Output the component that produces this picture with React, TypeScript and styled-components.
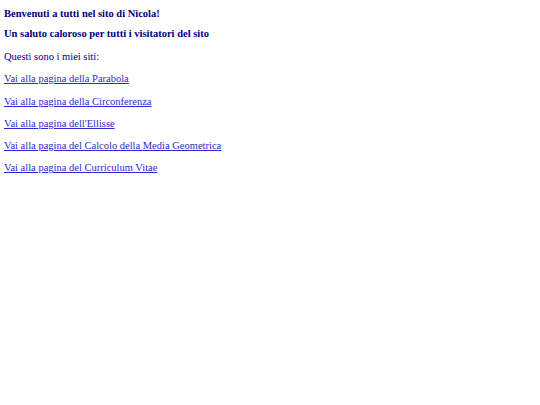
import * as React from "react";
import styled, { createGlobalStyle } from "styled-components";

const GlobalStyle = createGlobalStyle`
  html, body {
    margin: 0;
    padding: 0;
    background: #ffffff;
  }
  body {
    font-family: "Liberation Serif", "Times New Roman", serif;
    font-size: 10.5px;
    color: #000080;
  }
`;

const Page = styled.div`
  padding: 0 4px;
`;

const Heading = styled.h4`
  margin: 7px 0 0;
  font-size: 10.5px;
  font-weight: bold;
  line-height: 14px;
  color: #000080;
`;

const SubHeading = styled(Heading)`
  margin-top: 6px;
`;

const Intro = styled.p`
  margin: 9px 0 0;
  line-height: 14px;
  color: #000080;
`;

const LinkList = styled.div`
  display: flex;
  flex-direction: column;
`;

const PageLink = styled.a`
  display: block;
  margin-top: 8.3px;
  line-height: 14px;
  color: #2a2ad0;
  text-decoration: underline;
`;

const sites = [
  "Vai alla pagina della Parabola",
  "Vai alla pagina della Circonferenza",
  "Vai alla pagina dell'Ellisse",
  "Vai alla pagina del Calcolo della Media Geometrica",
  "Vai alla pagina del Curriculum Vitae",
];

const App = () => {
  return (
    <>
      <GlobalStyle />
      <Page>
        <Heading>Benvenuti a tutti nel sito di Nicola!</Heading>
        <SubHeading>Un saluto caloroso per tutti i visitatori del sito</SubHeading>
        <Intro>Questi sono i miei siti:</Intro>
        <LinkList>
          {sites.map((s) => (
            <PageLink key={s} href="#">
              {s}
            </PageLink>
          ))}
        </LinkList>
      </Page>
    </>
  );
};

export default App;
